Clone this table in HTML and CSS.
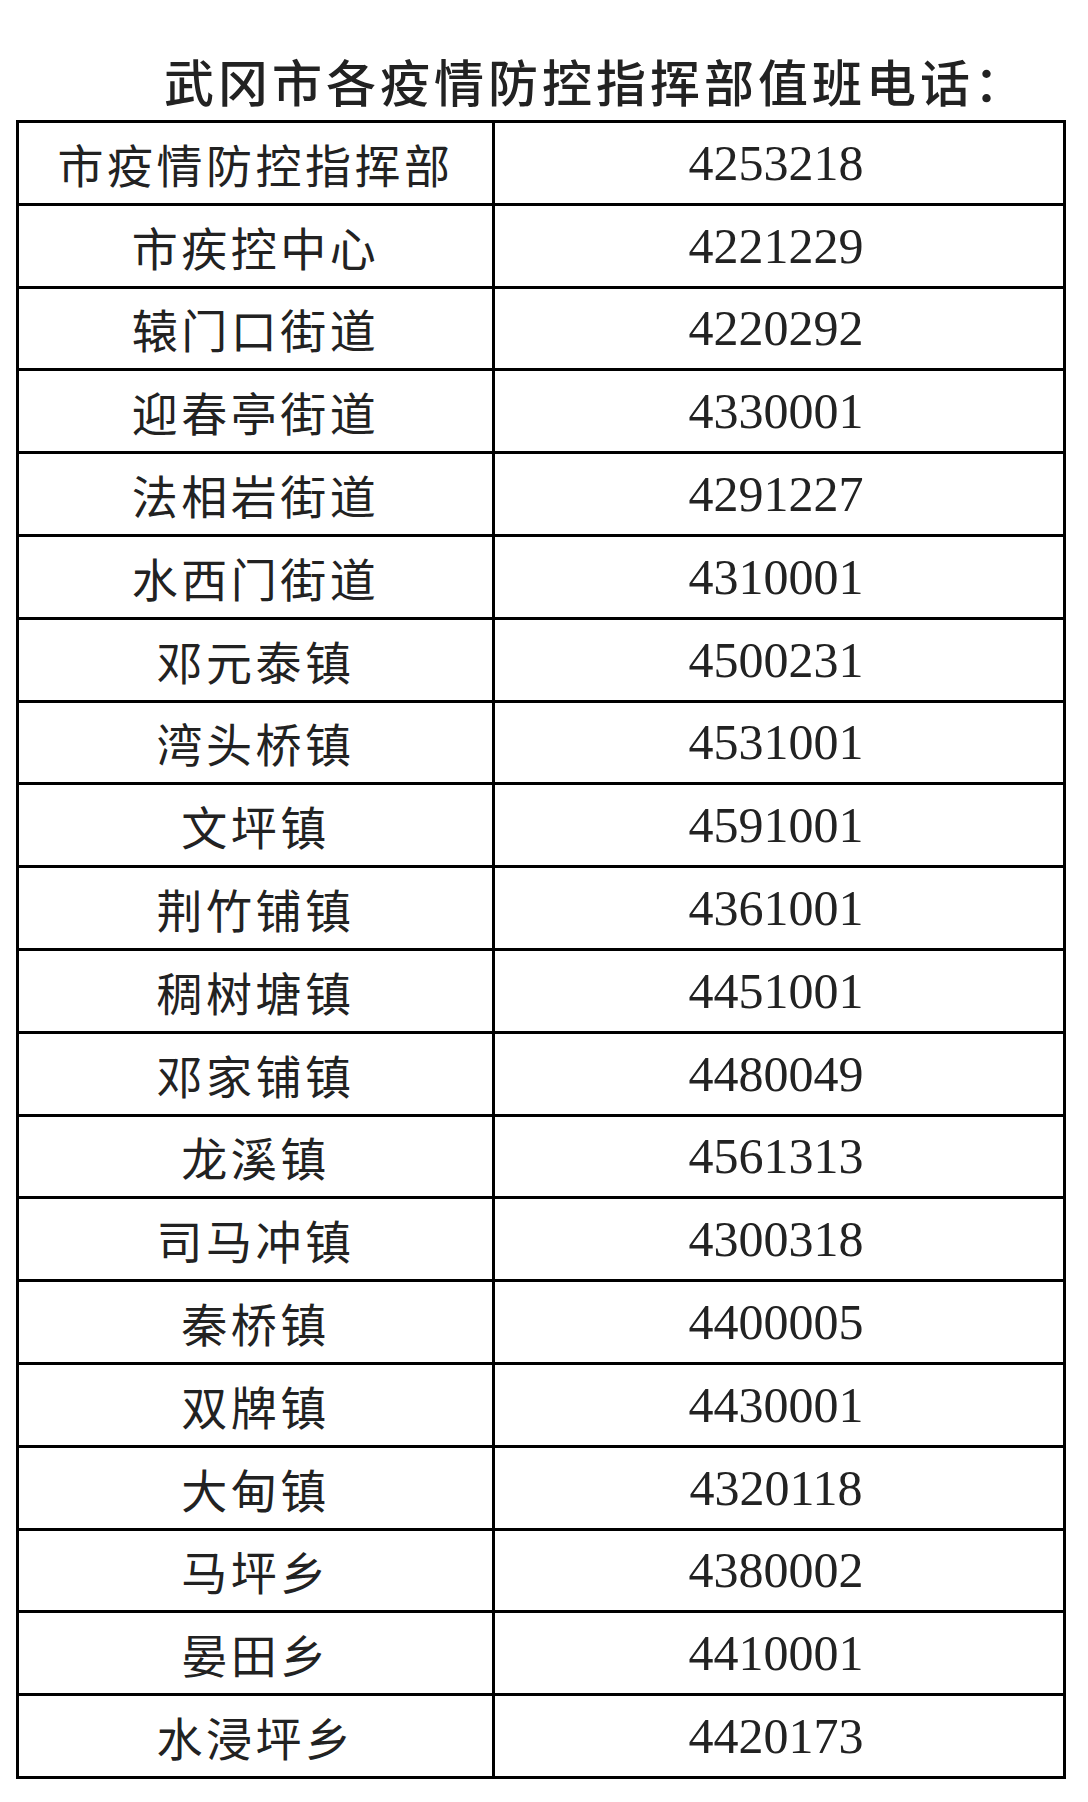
FILE: index.html
```html
<!DOCTYPE html>
<html lang="zh-CN">
<head>
<meta charset="utf-8">
<title>武冈市各疫情防控指挥部值班电话</title>
<link rel="stylesheet" href="styles.css">
</head>
<body>
<div class="page">
  <h1 class="title">武冈市各疫情防控指挥部值班电话：</h1>
  <div class="table">
    <div class="row"><div class="name">市疫情防控指挥部</div><div class="tel">4253218</div></div>
    <div class="row"><div class="name">市疾控中心</div><div class="tel">4221229</div></div>
    <div class="row"><div class="name">辕门口街道</div><div class="tel">4220292</div></div>
    <div class="row"><div class="name">迎春亭街道</div><div class="tel">4330001</div></div>
    <div class="row"><div class="name">法相岩街道</div><div class="tel">4291227</div></div>
    <div class="row"><div class="name">水西门街道</div><div class="tel">4310001</div></div>
    <div class="row"><div class="name">邓元泰镇</div><div class="tel">4500231</div></div>
    <div class="row"><div class="name">湾头桥镇</div><div class="tel">4531001</div></div>
    <div class="row"><div class="name">文坪镇</div><div class="tel">4591001</div></div>
    <div class="row"><div class="name">荆竹铺镇</div><div class="tel">4361001</div></div>
    <div class="row"><div class="name">稠树塘镇</div><div class="tel">4451001</div></div>
    <div class="row"><div class="name">邓家铺镇</div><div class="tel">4480049</div></div>
    <div class="row"><div class="name">龙溪镇</div><div class="tel">4561313</div></div>
    <div class="row"><div class="name">司马冲镇</div><div class="tel">4300318</div></div>
    <div class="row"><div class="name">秦桥镇</div><div class="tel">4400005</div></div>
    <div class="row"><div class="name">双牌镇</div><div class="tel">4430001</div></div>
    <div class="row"><div class="name">大甸镇</div><div class="tel">4320118</div></div>
    <div class="row"><div class="name">马坪乡</div><div class="tel">4380002</div></div>
    <div class="row"><div class="name">晏田乡</div><div class="tel">4410001</div></div>
    <div class="row"><div class="name">水浸坪乡</div><div class="tel">4420173</div></div>
  </div>
</div>
</body>
</html>
```
FILE: styles.css
```css
html, body {
  margin: 0;
  padding: 0;
  background: #ffffff;
}

.page {
  width: 1088px;
  padding-top: 50px;
}

.title {
  margin: 0 0 10px 0;
  padding-left: 164px;
  font-family: "Noto Sans CJK SC", "Noto Sans", sans-serif;
  font-size: 50px;
  font-weight: 500;
  line-height: 60px;
  letter-spacing: 4px;
  color: #222222;
  white-space: nowrap;
}

.table {
  margin-left: 16px;
  width: 1050px;
  box-sizing: border-box;
  border: 3px solid #000000;
  display: flex;
  flex-direction: column;
}

.row {
  display: grid;
  grid-template-columns: 476px 1fr;
  border-bottom: 3px solid #000000;
}

.row:last-child {
  border-bottom: none;
}

.name,
.tel {
  height: 79.8px;
  display: flex;
  align-items: center;
  justify-content: center;
  color: #222222;
  white-space: nowrap;
}

.name {
  border-right: 3px solid #000000;
  font-family: "Noto Sans CJK SC", "Noto Sans", sans-serif;
  font-size: 46px;
  font-weight: 400;
  letter-spacing: 3.5px;
  padding-left: 0;
}

.tel {
  font-family: "Liberation Serif", "Times New Roman", serif;
  font-size: 50px;
  padding-right: 6px;
}
```
